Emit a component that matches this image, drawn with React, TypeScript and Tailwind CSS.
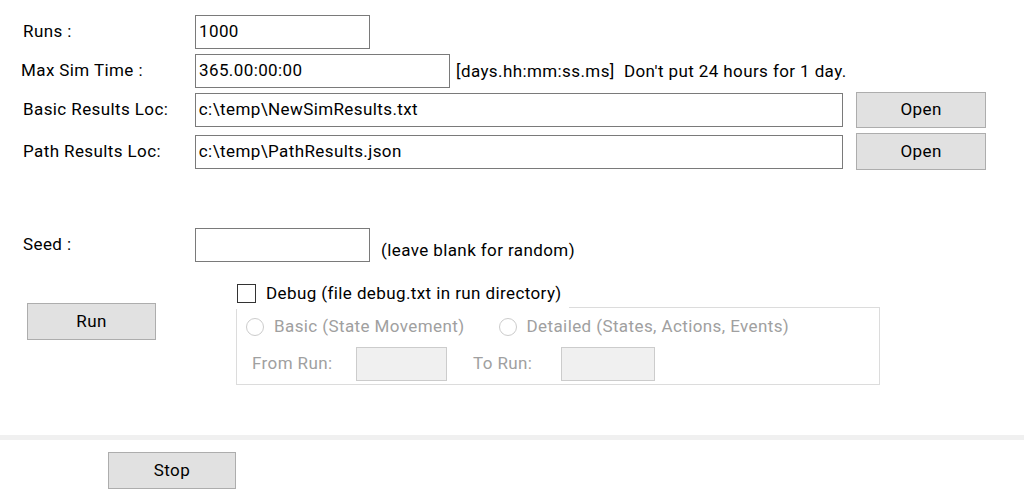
import React from 'react';

const font = { fontFamily: 'Roboto, "Noto Sans", sans-serif' };

const TextBox: React.FC<{ value?: string; className?: string }> = ({ value = '', className = '' }) => (
  <div className={`h-[34px] border border-[#7a7a7a] bg-white flex items-center pl-[3px] text-black ${className}`}>
    {value}
  </div>
);

const WinButton: React.FC<{ label: string; className?: string }> = ({ label, className = '' }) => (
  <div className={`flex items-center justify-center border border-[#adadad] bg-[#e1e1e1] text-black ${className}`}>
    {label}
  </div>
);

const Radio: React.FC<{ label: string }> = ({ label }) => (
  <div className="flex items-center gap-[10px]">
    <span className="w-[18px] h-[18px] rounded-full border border-[#cccccc] bg-white" />
    <span>{label}</span>
  </div>
);

export default function App() {
  return (
    <div className="w-[1024px] h-[497px] bg-white text-[17px] tracking-[0.4px] text-black overflow-hidden" style={font}>
      {/* Settings */}
      <div className="pt-[15px] pr-[38px]">
        <div className="flex items-center h-[34px]">
          <span className="w-[195px] pl-[23px]">Runs :</span>
          <TextBox value="1000" className="w-[175px]" />
        </div>

        <div className="flex items-center h-[34px] mt-[5px]">
          <span className="w-[195px] pl-[21px]">Max Sim Time :</span>
          <TextBox value="365.00:00:00" className="w-[255px]" />
          <span className="ml-[6px] pt-[2px] whitespace-pre">[days.hh:mm:ss.ms]  Don't put 24 hours for 1 day.</span>
        </div>

        <div className="flex items-center h-[36px] mt-[4px]">
          <span className="w-[195px] pl-[23px]">Basic Results Loc:</span>
          <TextBox value="c:\temp\NewSimResults.txt" className="w-[649px]" />
          <WinButton label="Open" className="ml-[13px] w-[130px] h-[36px]" />
        </div>

        <div className="flex items-center h-[37px] mt-[5px]">
          <span className="w-[195px] pl-[23px]">Path Results Loc:</span>
          <TextBox value="c:\temp\PathResults.json" className="w-[649px]" />
          <WinButton label="Open" className="ml-[13px] w-[130px] h-[37px]" />
        </div>

        <div className="flex items-center h-[34px] mt-[58px]">
          <span className="w-[195px] pl-[23px]">Seed :</span>
          <TextBox className="w-[175px]" />
          <span className="ml-[11px] pt-[12px]">(leave blank for random)</span>
        </div>
      </div>

      {/* Run + debug options */}
      <div className="flex mt-[22px]">
        <div className="w-[236px] pl-[27px] pt-[19px]">
          <WinButton label="Run" className="w-[129px] h-[37px]" />
        </div>
        <div className="w-[644px] relative">
          <div className="flex items-center h-[19px] pl-[1px]">
            <span className="w-[19px] h-[19px] border border-[#333333] bg-white" />
            <span className="ml-[10px] pr-[4px] bg-white">Debug (file debug.txt in run directory)</span>
          </div>
          <div className="mt-[4px] h-[78px] border border-[#dcdcdc] text-[#a0a0a0]">
            <div className="flex items-center gap-[34px] pl-[9px] pt-[6px]">
              <Radio label="Basic (State Movement)" />
              <Radio label="Detailed (States, Actions, Events)" />
            </div>
            <div className="flex items-center pl-[15px] mt-[7px]">
              <span className="w-[104px]">From Run:</span>
              <span className="w-[91px] h-[34px] border border-[#cccccc] bg-[#f0f0f0]" />
              <span className="ml-[26px] w-[88px]">To Run:</span>
              <span className="w-[94px] h-[34px] border border-[#cccccc] bg-[#f0f0f0]" />
            </div>
          </div>
          <div className="absolute left-0 top-[19px] w-[333px] h-[6px] bg-white" />
        </div>
      </div>

      {/* Bottom bar */}
      <div className="mt-[50px] h-[5px] bg-[#f0f0f0]" />
      <div className="pl-[108px] pt-[12px]">
        <WinButton label="Stop" className="w-[128px] h-[37px]" />
      </div>
    </div>
  );
}
